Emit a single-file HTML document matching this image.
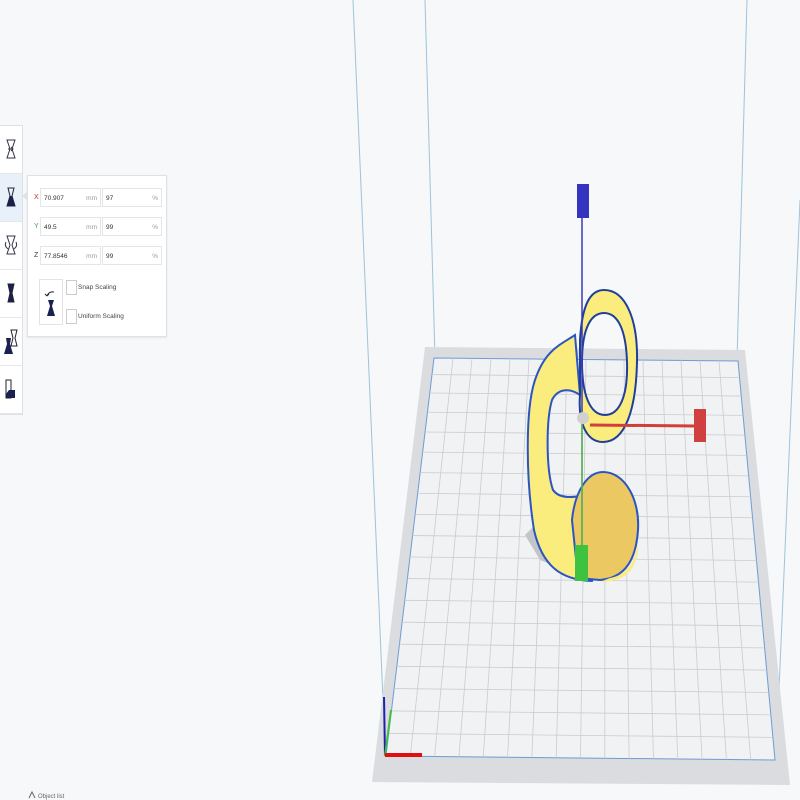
<!DOCTYPE html>
<html><head><meta charset="utf-8"><style>
html,body{margin:0;padding:0;width:800px;height:800px;overflow:hidden;background:#f7f8f9;font-family:"Liberation Sans",sans-serif}
svg{position:absolute;left:0;top:0}
.tools{position:absolute;left:0;top:125px;width:22px;border:1px solid #dde1e5;border-left:none;background:#fff}
.tools div{height:47px;border-bottom:1px solid #e4e7ea;position:relative}
.tools div.sel{background:#e8f0fa}
.panel{position:absolute;left:27px;top:175px;width:138px;height:160px;background:#fff;border:1px solid #dfe2e5;box-shadow:0 1px 2px rgba(0,0,0,.08)}
.row{position:absolute;left:4px;height:20px;font-size:7px;color:#333}
.row .l{position:absolute;left:2px;top:6px}
.f{position:absolute;top:0;height:19px;border:1px solid #e3e5e8;background:#fff;font-size:6.5px;line-height:19px;padding-left:3px;box-sizing:border-box;color:#333}
.f span{position:absolute;right:3px;color:#999}
.cb{position:absolute;width:9px;height:13px;border:1px solid #ccc;background:#fff}
.lab{position:absolute;font-size:6.5px;color:#444}
</style></head><body>
<svg width="800" height="800" id="s">
<g stroke="#9fc3dc" stroke-width="1" fill="none">
<line x1="353" y1="0" x2="383" y2="700"/>
<line x1="425" y1="0" x2="435" y2="358"/>
<line x1="747" y1="0" x2="737" y2="360"/>
<line x1="800" y1="200" x2="776" y2="760"/>
</g>
<polygon points="425,347 745,350 790,785 372,782" fill="#dadcdf"/>
<polygon points="434,358 738,361 775,760 386,756" fill="#f1f2f3" stroke="#6f9bd6" stroke-width="1"/>
<g id="grid" stroke="#c9ccd0" stroke-width="0.8"></g>
<!-- shadow -->
<path d="M540,520 L525,535 L540,560 L590,580 L560,540 Z" fill="#c3c5c8"/>
<!-- object -->
<path d="M575,335 C560,345 545,350 535,380 C525,410 526,480 534,530 C542,565 560,580 592,581 L600,560 L588,495 C575,497 560,500 553,490 C546,470 546,420 552,400 C558,388 570,388 580,395 Z" fill="#fbec7e" stroke="#2b55c2" stroke-width="2"/>
<path d="M603,472 C625,472 640,500 638,530 C636,560 625,578 600,580 L578,578 L572,520 C575,490 588,472 603,472 Z" fill="#ecc862" stroke="#2b55c2" stroke-width="2"/>
<path d="M610,578 C628,575 637,560 638,540 L638,550 C636,570 625,582 600,582 Z" fill="#fbec7e"/>
<path fill-rule="evenodd" d="M604,290 C626,290 638,320 637,362 C636,410 625,442 603,442 C585,442 578,420 580,395 L580,340 C582,305 590,290 604,290 Z M604,313 C588,313 582,335 582,362 C582,395 590,415 605,415 C620,415 628,395 627,362 C626,330 618,313 604,313 Z" fill="#fbec7e" stroke="#1f3f9a" stroke-width="2"/>
<!-- handles -->
<line x1="582" y1="215" x2="582" y2="555" stroke="#3a3ab8" stroke-width="1.5"/>
<line x1="582" y1="420" x2="582" y2="555" stroke="#5ec24a" stroke-width="1.5"/>
<rect x="577" y="184" width="12" height="34" fill="#3434c0"/>
<rect x="575" y="545" width="13" height="36" fill="#3fc23f"/>
<circle cx="583" cy="418" r="6" fill="#d0d0d0"/>
<line x1="590" y1="425" x2="695" y2="426" stroke="#d04038" stroke-width="3"/>
<rect x="694" y="409" width="12" height="33" fill="#d04040"/>
<!-- axes -->
<line x1="384" y1="697" x2="385" y2="756" stroke="#2020b0" stroke-width="2"/>
<line x1="385" y1="756" x2="391" y2="710" stroke="#40c040" stroke-width="2"/>
<line x1="385" y1="755" x2="422" y2="755" stroke="#e01010" stroke-width="4"/>
<text x="38" y="798" font-size="6" fill="#666" font-family="Liberation Sans">Object list</text>
<path d="M29,798 L32,792 L35,798" stroke="#666" fill="none"/>
</svg>
<script>
(function(){var g=document.getElementById('grid'),ns='http://www.w3.org/2000/svg';
var TL=[434,358],TR=[738,361],BR=[775,760],BL=[386,756];
function L(a,b,t){return [a[0]+(b[0]-a[0])*t,a[1]+(b[1]-a[1])*t]}
var nc=16,nr=19,i;
for(i=1;i<nc;i++){var t=i/nc,p=L(TL,TR,t),q=L(BL,BR,t);var l=document.createElementNS(ns,'line');l.setAttribute('x1',p[0]);l.setAttribute('y1',p[1]);l.setAttribute('x2',q[0]);l.setAttribute('y2',q[1]);g.appendChild(l);}
for(i=1;i<nr;i++){var t=Math.pow(i/nr,1.08),p=L(TL,BL,t),q=L(TR,BR,t);var l=document.createElementNS(ns,'line');l.setAttribute('x1',p[0]);l.setAttribute('y1',p[1]);l.setAttribute('x2',q[0]);l.setAttribute('y2',q[1]);g.appendChild(l);}
})();
</script>
<div class="tools">
<div><svg width="22" height="47"><path d="M7,14 H15 L12,23 L15,32 H7 L10,23 Z" fill="none" stroke="#334" stroke-width="1"/><path d="M8,23 H13 M11,21 L13,23 L11,25" stroke="#334" fill="none"/></svg></div>
<div class="sel"><svg width="22" height="47"><path d="M8,14 H14 L12,22 L15,32 H7 L10,22 Z" fill="none" stroke="#223" stroke-width="1"/><path d="M10,22 H12 L15,32 H7 Z" fill="#1a2050"/></svg></div>
<div><svg width="22" height="47"><path d="M7,14 H15 L12,23 L15,32 H7 L10,23 Z" fill="none" stroke="#334"/><path d="M6,20 Q4,24 8,27 M16,20 Q18,24 14,27" stroke="#334" fill="none"/></svg></div>
<div><svg width="22" height="47"><path d="M8,14 H14 L12,23 L14,32 H8 L10,23 Z" fill="#1a2050" stroke="#223"/></svg></div>
<div><svg width="22" height="47"><path d="M11,12 H17 L15,20 L17,28 H11 L13,20 Z" fill="none" stroke="#223"/><path d="M6,20 H11 L10,26 L13,36 H4 L7,26 Z" fill="#1a2050"/></svg></div>
<div><svg width="22" height="47"><path d="M6,14 H11 V32 H6 Z" fill="none" stroke="#223"/><path d="M9,24 H15 V32 H6 V28 Z" fill="#1a2050"/></svg></div>
</div>
<div class="panel">
<div class="row" style="top:12px"><span class="l" style="color:#c03030">X</span><div class="f" style="left:8px;width:61px">70.907<span>mm</span></div><div class="f" style="left:70px;width:60px">97<span>%</span></div></div>
<div class="row" style="top:41px"><span class="l" style="color:#40a040">Y</span><div class="f" style="left:8px;width:61px">49.5<span>mm</span></div><div class="f" style="left:70px;width:60px">99<span>%</span></div></div>
<div class="row" style="top:70px"><span class="l">Z</span><div class="f" style="left:8px;width:61px">77.8546<span>mm</span></div><div class="f" style="left:70px;width:60px">99<span>%</span></div></div>
<div style="position:absolute;left:11px;top:103px;width:22px;height:44px;border:1px solid #e1e3e6"><svg width="22" height="44"><path d="M8,20 H14 L12,26 L15,36 H7 L10,26 Z" fill="#1a2050"/><path d="M7,16 Q9,11 14,12 M7,16 L5,14 M7,16 L9,14" stroke="#223" fill="none"/></svg></div>
<div class="cb" style="left:38px;top:104px"></div><div class="lab" style="left:50px;top:108px">Snap Scaling</div>
<div class="cb" style="left:38px;top:133px"></div><div class="lab" style="left:50px;top:137px">Uniform Scaling</div>
</div>
<div style="position:absolute;left:22px;top:191px;width:0;height:0;border-top:5px solid transparent;border-bottom:5px solid transparent;border-right:6px solid #dfe2e5"></div>
</body></html>
